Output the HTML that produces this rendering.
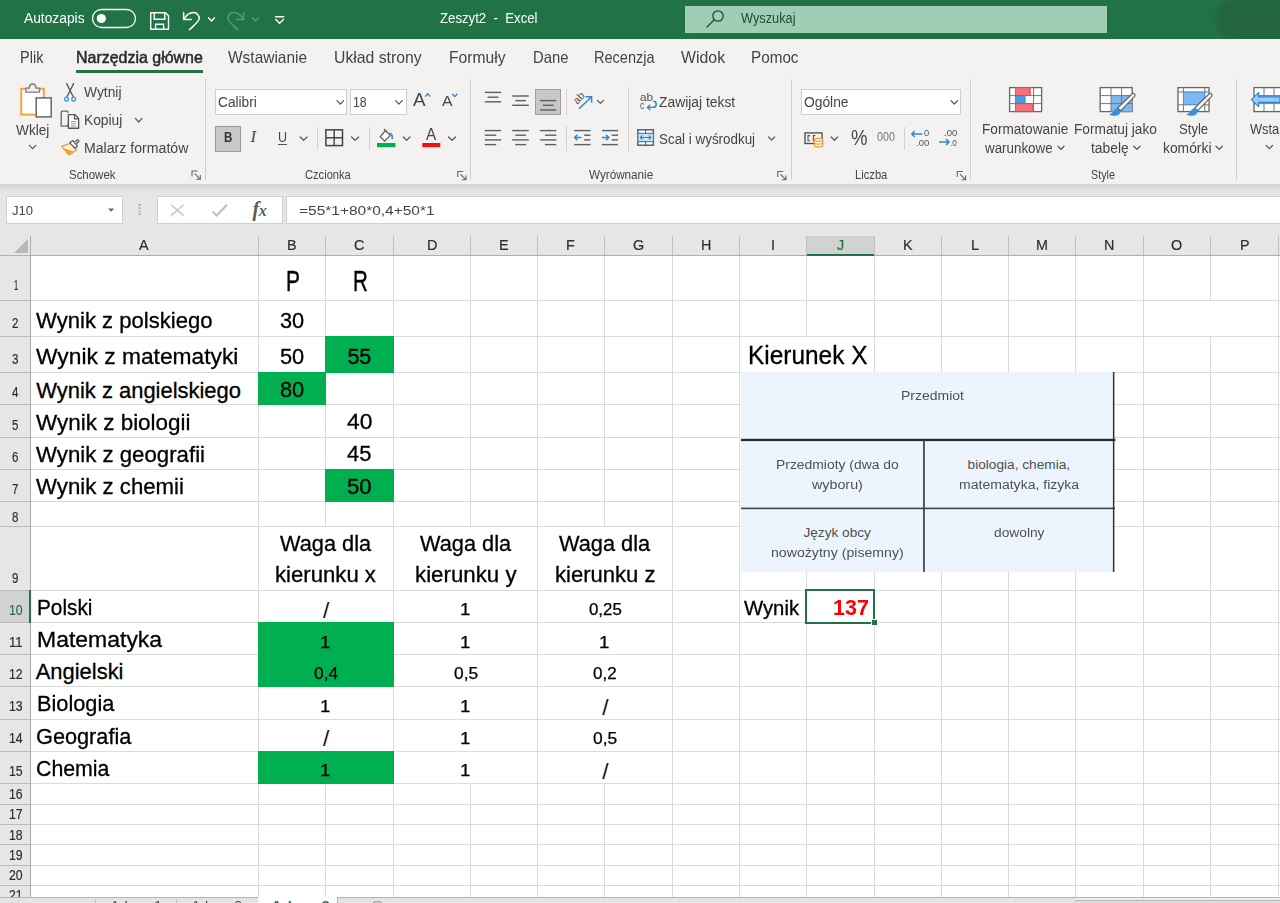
<!DOCTYPE html>
<html lang="pl"><head><meta charset="utf-8"><title>Zeszyt2 - Excel</title>
<style>
html,body{margin:0;padding:0;}
body{width:1280px;height:903px;overflow:hidden;position:relative;background:#fff;font-family:"Liberation Sans",sans-serif;}
body div{position:absolute;box-sizing:border-box;}
.t{white-space:pre;}
svg{position:absolute;overflow:visible;}

</style></head><body>
<div style="left:0px;top:0px;width:1280px;height:39px;background:#217346;"></div>
<div style="left:0px;top:39px;width:1280px;height:145px;background:#f3f2f1;"></div>
<div style="left:0px;top:184px;width:1280px;height:72px;background:#e6e6e6;"></div>
<div style="left:0;top:184px;width:1280px;height:7px;background:linear-gradient(#d2d2d2,#e6e6e6);"></div>
<div class="t" style="left:24.00px;top:9.36px;font-size:14.83px;line-height:19px;color:#fff;transform:scaleX(0.9293);transform-origin:left center;">Autozapis</div>
<div class="t" style="left:439.50px;top:9.16px;font-size:14.83px;line-height:19px;color:#fff;transform:scaleX(0.8896);transform-origin:left center;">Zeszyt2  -  Excel</div>
<div style="left:685px;top:6px;width:422px;height:27px;background:#a0ceb4;"></div>
<div class="t" style="left:740.50px;top:9.16px;font-size:14.83px;line-height:19px;color:#1e4e33;transform:scaleX(0.8607);transform-origin:left center;">Wyszukaj</div>
<div style="left:1180px;top:0;width:100px;height:39px;overflow:hidden;"><div style="left:36px;top:-3px;width:80px;height:45px;background:#22653f;border-radius:24px 0 0 24px;filter:blur(3px);"></div></div>
<svg style="left:0;top:0" width="1280" height="40" viewBox="0 0 1280 40">
<rect x="92.5" y="9.5" width="43" height="18" rx="9" fill="none" stroke="#fff" stroke-width="1.3"/>
<circle cx="101.3" cy="18.5" r="4.6" fill="#fff"/>
<path d="M150.7 12.8 H165.5 L168.5 15.8 V29.3 H150.7 Z" fill="none" stroke="#fff" stroke-width="1.4" stroke-linejoin="round"/>
<path d="M154.2 12.8 V19.2 H164.8 V12.8 M155.6 29.3 V24.3 H163.6 V29.3" fill="none" stroke="#fff" stroke-width="1.4"/>
<path d="M183.6 12.4 V19.6 H191.2" fill="none" stroke="#fff" stroke-width="1.5" stroke-linecap="round" stroke-linejoin="round"/>
<path d="M184 19.2 C186.5 15 190 12.6 193.3 12.6 C197.5 12.6 199.6 16 199.2 19 C198.8 21.5 196 23.5 189.3 29.8" fill="none" stroke="#fff" stroke-width="1.5" stroke-linecap="round"/>
<path d="M208.5 17.8 L211.5 21 L214.5 17.8" fill="none" stroke="#fff" stroke-width="1.4" stroke-linecap="round" stroke-linejoin="round"/>
<path d="M243.6 12.4 V19.6 H236" fill="none" stroke="#5c9a76" stroke-width="1.5" stroke-linecap="round" stroke-linejoin="round"/>
<path d="M243.2 19.2 C240.7 15 237.2 12.6 233.9 12.6 C229.7 12.6 227.6 16 228 19 C228.4 21.5 231.2 23.5 237.9 29.8" fill="none" stroke="#5c9a76" stroke-width="1.5" stroke-linecap="round"/>
<path d="M252.5 17.8 L255.5 21 L258.5 17.8" fill="none" stroke="#5c9a76" stroke-width="1.4" stroke-linecap="round" stroke-linejoin="round"/>
<path d="M275.5 16.8 H283.7" fill="none" stroke="#fff" stroke-width="1.4" stroke-linecap="round"/>
<path d="M275.8 19.6 L279.6 23.2 L283.4 19.6" fill="none" stroke="#fff" stroke-width="1.4" stroke-linecap="round" stroke-linejoin="round"/>
<circle cx="718" cy="16" r="5.2" fill="none" stroke="#1e4e33" stroke-width="1.3"/>
<path d="M714.2 19.8 L707 27" stroke="#1e4e33" stroke-width="1.3" stroke-linecap="round"/>
</svg>
<div class="t" style="left:20.00px;top:46.66px;font-size:16.28px;line-height:21px;color:#444;transform:scaleX(0.8938);transform-origin:left center;">Plik</div>
<div class="t" style="left:227.50px;top:46.66px;font-size:16.28px;line-height:21px;color:#444;transform:scaleX(0.9511);transform-origin:left center;">Wstawianie</div>
<div class="t" style="left:334.20px;top:46.66px;font-size:16.28px;line-height:21px;color:#444;transform:scaleX(0.9700);transform-origin:left center;">Układ strony</div>
<div class="t" style="left:449.20px;top:46.66px;font-size:16.28px;line-height:21px;color:#444;transform:scaleX(0.9614);transform-origin:left center;">Formuły</div>
<div class="t" style="left:532.50px;top:46.66px;font-size:16.28px;line-height:21px;color:#444;transform:scaleX(0.9124);transform-origin:left center;">Dane</div>
<div class="t" style="left:593.80px;top:46.66px;font-size:16.28px;line-height:21px;color:#444;transform:scaleX(0.8931);transform-origin:left center;">Recenzja</div>
<div class="t" style="left:681.30px;top:46.66px;font-size:16.28px;line-height:21px;color:#444;transform:scaleX(0.9749);transform-origin:left center;">Widok</div>
<div class="t" style="left:751.30px;top:46.66px;font-size:16.28px;line-height:21px;color:#444;transform:scaleX(0.9382);transform-origin:left center;">Pomoc</div>
<div class="t" style="left:76.00px;top:46.66px;font-size:16.28px;line-height:21px;color:#2b2b2b;-webkit-text-stroke:0.5px #2b2b2b;transform:scaleX(0.9813);transform-origin:left center;">Narzędzia główne</div>
<div style="left:76px;top:70px;width:127px;height:3px;background:#217346;"></div>
<div style="left:205px;top:79px;width:1px;height:101px;background:#d0cfce;"></div>
<div style="left:470px;top:79px;width:1px;height:101px;background:#d0cfce;"></div>
<div style="left:791px;top:79px;width:1px;height:101px;background:#d0cfce;"></div>
<div style="left:970px;top:79px;width:1px;height:101px;background:#d0cfce;"></div>
<div style="left:1236px;top:79px;width:1px;height:101px;background:#d0cfce;"></div>
<div style="left:317px;top:127px;width:1px;height:23px;background:#d2d1d0;"></div>
<div style="left:369px;top:127px;width:1px;height:23px;background:#d2d1d0;"></div>
<div style="left:565.5px;top:89px;width:1px;height:25.5px;background:#d2d1d0;"></div>
<div style="left:565.5px;top:126px;width:1px;height:24.5px;background:#d2d1d0;"></div>
<div style="left:627.5px;top:86.5px;width:1px;height:64.5px;background:#d2d1d0;"></div>
<div style="left:903.5px;top:127px;width:1px;height:23px;background:#d2d1d0;"></div>
<svg style="left:0;top:0" width="1280" height="200" viewBox="0 0 1280 200">
<rect x="21.2" y="88.8" width="22.6" height="25.8" fill="#fff" stroke="#f0a540" stroke-width="2"/>
<path d="M25.8 92.2 V88.2 H29.3 C29.3 82.6 36 82.6 36 88.2 H39.6 V92.2 Z" fill="#f3f2f1" stroke="#7a7a7a" stroke-width="1.3" stroke-linejoin="round"/>
<rect x="36.2" y="97.9" width="15" height="19" fill="#fff" stroke="#666" stroke-width="1.5"/>
<path d="M29.4 145.4 L32.599999999999994 148.6 L35.8 145.4" fill="none" stroke="#555" stroke-width="1.25" stroke-linecap="round" stroke-linejoin="round"/>
<path d="M66.6 83.6 L73.2 96.8 M73.6 83.6 L67 96.8" stroke="#555" stroke-width="1.3" stroke-linecap="round"/>
<circle cx="66.5" cy="99.1" r="1.9" fill="none" stroke="#3a96dd" stroke-width="1.3"/>
<circle cx="73.7" cy="99.1" r="1.9" fill="none" stroke="#3a96dd" stroke-width="1.3"/>
<path d="M68.2 123.5 V126.2 H61.2 V112.6 C61.2 111.6 61.8 111.2 62.6 111.2 H66.8 C67.8 111.2 68.2 111.8 68.2 113" fill="none" stroke="#666" stroke-width="1.3"/>
<path d="M68.4 114.6 H74.6 L78.6 118.6 V128.3 H68.4 Z" fill="#fff" stroke="#555" stroke-width="1.4" stroke-linejoin="round"/>
<path d="M74.4 114.8 V118.8 H78.4" fill="none" stroke="#555" stroke-width="1.2"/>
<path d="M71 121.6 H76 M71 123.8 H76 M71 126 H76" stroke="#8a8a8a" stroke-width="0.9"/>
<path d="M61.6 146.4 L69 155 L76.6 150 L70.6 143.4 Z" fill="#fdf1e0" stroke="#ee9a2e" stroke-width="1.3" stroke-linejoin="round"/>
<path d="M63.6 148.2 L69.2 154.6 L73.6 151.6 Z" fill="#f0a030"/>
<path d="M69.8 142.6 L72.8 140.6 L77.4 146.2 L75 148.4 Z" fill="#fff" stroke="#555" stroke-width="1.2" stroke-linejoin="round"/>
<path d="M74.6 142.2 L77.6 139.6 L79 141 L76.2 144" fill="#fff" stroke="#555" stroke-width="1.2" stroke-linejoin="round"/>
<path d="M135.4 118.4 L138.7 122 L142 118.4" fill="none" stroke="#555" stroke-width="1.25" stroke-linecap="round" stroke-linejoin="round"/>
<path d="M192.0 176.5 V171.0 H197.5" fill="none" stroke="#666" stroke-width="1.1"/><path d="M194.7 173.7 L200.1 179.1 M200.3 175.1 V179.3 H196.1" fill="none" stroke="#666" stroke-width="1.1"/>
</svg>
<div class="t" style="left:16.00px;top:120.57px;font-size:13.95px;line-height:18px;color:#444;transform:scaleX(0.9792);transform-origin:left center;">Wklej</div>
<div class="t" style="left:83.50px;top:83.47px;font-size:13.95px;line-height:18px;color:#444;transform:scaleX(0.9901);transform-origin:left center;">Wytnij</div>
<div class="t" style="left:83.50px;top:111.17px;font-size:13.95px;line-height:18px;color:#444;transform:scaleX(0.9876);transform-origin:left center;">Kopiuj</div>
<div class="t" style="left:83.50px;top:138.77px;font-size:13.95px;line-height:18px;color:#444;transform:scaleX(1.0130);transform-origin:left center;">Malarz formatów</div>
<div class="t" style="left:69.40px;top:166.97px;font-size:12.21px;line-height:16px;color:#444;transform:scaleX(0.9389);transform-origin:left center;">Schowek</div>
<div class="t" style="left:304.80px;top:166.97px;font-size:12.21px;line-height:16px;color:#444;transform:scaleX(0.9115);transform-origin:left center;">Czcionka</div>
<div class="t" style="left:588.50px;top:166.97px;font-size:12.21px;line-height:16px;color:#444;transform:scaleX(0.9569);transform-origin:left center;">Wyrównanie</div>
<div class="t" style="left:854.70px;top:166.97px;font-size:12.21px;line-height:16px;color:#444;transform:scaleX(0.9166);transform-origin:left center;">Liczba</div>
<div class="t" style="left:1090.60px;top:166.97px;font-size:12.21px;line-height:16px;color:#444;transform:scaleX(0.8797);transform-origin:left center;">Style</div>
<div style="left:215px;top:89px;width:132px;height:26px;background:#fff;border:1px solid #d0cecc;"></div>
<div style="left:349.5px;top:89px;width:57px;height:26px;background:#fff;border:1px solid #d0cecc;"></div>
<div class="t" style="left:217.80px;top:92.77px;font-size:13.95px;line-height:18px;color:#444;transform:scaleX(0.9836);transform-origin:left center;">Calibri</div>
<div class="t" style="left:353.30px;top:92.77px;font-size:13.95px;line-height:18px;color:#444;transform:scaleX(0.8848);transform-origin:left center;">18</div>
<div style="left:215px;top:126px;width:25.5px;height:25.5px;background:#c8c8c8;border:1px solid #9a9a9a;"></div>
<div class="t" style="left:223.70px;top:127.97px;font-size:14.53px;line-height:19px;color:#333;font-weight:bold;transform:scaleX(0.7934);transform-origin:left center;">B</div>
<div class="t" style="left:250.5px;top:126.3px;font-family:'Liberation Serif',serif;font-style:italic;font-size:16.5px;line-height:22px;color:#444;">I</div>
<div class="t" style="left:277.80px;top:128.47px;font-size:13.95px;line-height:18px;color:#444;transform:scaleX(0.8961);transform-origin:left center;">U</div>
<div style="left:277.5px;top:144.2px;width:9.6px;height:1.2px;background:#555;"></div>
<svg style="left:0;top:0" width="1280" height="200" viewBox="0 0 1280 200">
<path d="M337 100.6 L340.3 104.2 L343.6 100.6" fill="none" stroke="#555" stroke-width="1.25" stroke-linecap="round" stroke-linejoin="round"/>
<path d="M395.6 100.6 L398.9 104.2 L402.2 100.6" fill="none" stroke="#555" stroke-width="1.25" stroke-linecap="round" stroke-linejoin="round"/>
<path d="M300.2 137 L303.6 140.4 L307 137" fill="none" stroke="#555" stroke-width="1.25" stroke-linecap="round" stroke-linejoin="round"/>
<path d="M351.6 137 L355.1 140.4 L358.6 137" fill="none" stroke="#555" stroke-width="1.25" stroke-linecap="round" stroke-linejoin="round"/>
<path d="M403.3 137 L406.65 140.4 L410 137" fill="none" stroke="#555" stroke-width="1.25" stroke-linecap="round" stroke-linejoin="round"/>
<path d="M448.6 137 L452.1 140.4 L455.6 137" fill="none" stroke="#555" stroke-width="1.25" stroke-linecap="round" stroke-linejoin="round"/>
<path d="M425.2 96.6 L427.7 93.8 L430.2 96.6" fill="none" stroke="#2e86d0" stroke-width="1.3"/>
<path d="M452.2 93.8 L454.8 96.6 L457.4 93.8" fill="none" stroke="#2e86d0" stroke-width="1.3"/>
<rect x="325.9" y="129.8" width="16.6" height="15.8" fill="none" stroke="#444" stroke-width="1.5"/>
<path d="M334.2 129.8 V145.6 M325.9 137.7 H342.5" stroke="#444" stroke-width="1.4"/>
<rect x="377" y="143" width="18.5" height="4.2" fill="#00b050"/>
<path d="M380.2 136.6 L385.4 130.6 L390.2 135.4 L384.6 141.2 Z" fill="#fff" stroke="#555" stroke-width="1.2" stroke-linejoin="round"/>
<path d="M384 129 L387 132.2" stroke="#555" stroke-width="1.2"/>
<path d="M389 133.6 C391.6 133.2 392.6 135 392.2 139" fill="none" stroke="#2e86d0" stroke-width="1.6"/>
<rect x="422.3" y="143" width="18" height="4.2" fill="#ee1111"/>
<path d="M457.7 177 V171.5 H463.2" fill="none" stroke="#666" stroke-width="1.1"/><path d="M460.4 174.2 L465.8 179.6 M466.0 175.6 V179.8 H461.8" fill="none" stroke="#666" stroke-width="1.1"/>
</svg>
<div class="t" style="left:412.80px;top:87.45px;font-size:19.19px;line-height:25px;color:#444;transform:scaleX(0.9800);transform-origin:left center;">A</div>
<div class="t" style="left:442.30px;top:91.26px;font-size:15.41px;line-height:20px;color:#444;transform:scaleX(1.0267);transform-origin:left center;">A</div>
<div class="t" style="left:426.40px;top:124.36px;font-size:16.86px;line-height:22px;color:#444;transform:scaleX(0.9030);transform-origin:left center;">A</div>
<div style="left:535.4px;top:88.5px;width:25.6px;height:26.2px;background:#c8c8c8;border:1px solid #9e9e9e;"></div>
<svg style="left:0;top:0" width="1280" height="200" viewBox="0 0 1280 200"><path d="M484.8 92.4 H501.1" stroke="#5e5e5e" stroke-width="1.4"/><path d="M487.6 97.2 H498.5" stroke="#5e5e5e" stroke-width="1.4"/><path d="M484.8 101.8 H501.1" stroke="#5e5e5e" stroke-width="1.4"/><path d="M512.2 96 H528.8" stroke="#5e5e5e" stroke-width="1.4"/><path d="M515.3 100.6 H526" stroke="#5e5e5e" stroke-width="1.4"/><path d="M512.2 105.3 H528.8" stroke="#5e5e5e" stroke-width="1.4"/><path d="M540.1 100.6 H556.3" stroke="#5e5e5e" stroke-width="1.4"/><path d="M543 105.3 H553.6" stroke="#5e5e5e" stroke-width="1.4"/><path d="M540.1 110 H556.3" stroke="#5e5e5e" stroke-width="1.4"/><path d="M484.8 130.6 H501.1" stroke="#5e5e5e" stroke-width="1.4"/><path d="M484.8 135.2 H496.2" stroke="#5e5e5e" stroke-width="1.4"/><path d="M484.8 139.9 H501.1" stroke="#5e5e5e" stroke-width="1.4"/><path d="M484.8 144.6 H496.2" stroke="#5e5e5e" stroke-width="1.4"/><path d="M512.2 130.6 H528.8" stroke="#5e5e5e" stroke-width="1.4"/><path d="M515.3 135.2 H526" stroke="#5e5e5e" stroke-width="1.4"/><path d="M512.2 139.9 H528.8" stroke="#5e5e5e" stroke-width="1.4"/><path d="M515.3 144.6 H526" stroke="#5e5e5e" stroke-width="1.4"/><path d="M540.1 130.6 H556.3" stroke="#5e5e5e" stroke-width="1.4"/><path d="M545 135.2 H556.3" stroke="#5e5e5e" stroke-width="1.4"/><path d="M540.1 139.9 H556.3" stroke="#5e5e5e" stroke-width="1.4"/><path d="M545 144.6 H556.3" stroke="#5e5e5e" stroke-width="1.4"/><path d="M574.1 130.6 H590.5" stroke="#5e5e5e" stroke-width="1.4"/><path d="M584.1 135.2 H590.5" stroke="#5e5e5e" stroke-width="1.4"/><path d="M584.1 139.9 H590.5" stroke="#5e5e5e" stroke-width="1.4"/><path d="M574.1 144.6 H590.5" stroke="#5e5e5e" stroke-width="1.4"/><path d="M602 130.6 H618" stroke="#5e5e5e" stroke-width="1.4"/><path d="M611.6 135.2 H618" stroke="#5e5e5e" stroke-width="1.4"/><path d="M611.6 139.9 H618" stroke="#5e5e5e" stroke-width="1.4"/><path d="M602 144.6 H618" stroke="#5e5e5e" stroke-width="1.4"/>
<path d="M574.6 137.5 H581.4 M577.4 134.7 L574.6 137.5 L577.4 140.3" fill="none" stroke="#2b88d8" stroke-width="1.5"/>
<path d="M602 137.5 H608.8 M606 134.7 L608.8 137.5 L606 140.3" fill="none" stroke="#2b88d8" stroke-width="1.5"/>
<path d="M579 108.8 L591.4 97 M585.6 96.8 H591.6 V102.8" fill="none" stroke="#2b88d8" stroke-width="1.5"/>
<path d="M597.3 100.4 L600.45 103.4 L603.6 100.4" fill="none" stroke="#555" stroke-width="1.25" stroke-linecap="round" stroke-linejoin="round"/>
<path d="M768.7 137 L771.6500000000001 140.2 L774.6 137" fill="none" stroke="#555" stroke-width="1.25" stroke-linecap="round" stroke-linejoin="round"/>
<path d="M653.4 101.2 C657.4 101.4 657.2 107.4 653 107.4 H647.6 M650.2 104.8 L647.4 107.4 L650.2 110" fill="none" stroke="#2b88d8" stroke-width="1.4"/>
<rect x="637.8" y="129.8" width="15.6" height="15.4" fill="#fff" stroke="#555" stroke-width="1.4"/>
<path d="M645.6 129.8 V133.4 M645.6 141.6 V145.2" stroke="#666" stroke-width="1.1"/>
<rect x="637.8" y="133.4" width="15.6" height="8.2" fill="#cfe4f7" stroke="#2b88d8" stroke-width="1.2"/>
<path d="M640.4 137.5 H650.8 M642.4 135.5 L640.4 137.5 L642.4 139.5 M648.8 135.5 L650.8 137.5 L648.8 139.5" fill="none" stroke="#2b88d8" stroke-width="1.2"/>
<path d="M777.7 177 V171.5 H783.2" fill="none" stroke="#666" stroke-width="1.1"/><path d="M780.4000000000001 174.2 L785.8000000000001 179.6 M786.0 175.6 V179.8 H781.8000000000001" fill="none" stroke="#666" stroke-width="1.1"/>
</svg>
<div class="t" style="left:578.5px;top:93.5px;font-size:10.5px;line-height:12px;color:#555;transform:rotate(-48deg);transform-origin:left bottom;">ab</div>
<div class="t" style="left:639.80px;top:91.02px;font-size:10.03px;line-height:13px;color:#555;transform:scaleX(1.1856);transform-origin:left center;">ab</div>
<div class="t" style="left:639.80px;top:98.92px;font-size:10.03px;line-height:13px;color:#555;transform:scaleX(0.8375);transform-origin:left center;">c</div>
<div class="t" style="left:659.00px;top:92.67px;font-size:13.95px;line-height:18px;color:#444;transform:scaleX(0.9932);transform-origin:left center;">Zawijaj tekst</div>
<div class="t" style="left:659.00px;top:129.57px;font-size:13.95px;line-height:18px;color:#444;transform:scaleX(0.9618);transform-origin:left center;">Scal i wyśrodkuj</div>
<div style="left:801px;top:89px;width:160px;height:26px;background:#fff;border:1px solid #d0cecc;"></div>
<div class="t" style="left:803.80px;top:92.77px;font-size:13.95px;line-height:18px;color:#444;transform:scaleX(0.9914);transform-origin:left center;">Ogólne</div>
<svg style="left:0;top:0" width="1280" height="200" viewBox="0 0 1280 200">
<path d="M951 100.6 L954.3 104 L957.6 100.6" fill="none" stroke="#555" stroke-width="1.25" stroke-linecap="round" stroke-linejoin="round"/>
<path d="M831.2 137 L834.4000000000001 140.4 L837.6 137" fill="none" stroke="#555" stroke-width="1.25" stroke-linecap="round" stroke-linejoin="round"/>
<rect x="805" y="132.9" width="17" height="10.6" fill="#f3f2f1" stroke="#555" stroke-width="1.4"/>
<path d="M810 135.6 H808 V140.8 H810 M815.4 135.6 H813.4 V140.8 H815.4" fill="none" stroke="#555" stroke-width="1.1"/>
<path d="M814.4 139.8 V145.2 C814.4 147.4 822.8 147.4 822.8 145.2 V139.8" fill="#fff" stroke="#ee9a2e" stroke-width="1.2"/>
<ellipse cx="818.6" cy="139.8" rx="4.2" ry="1.5" fill="#fff" stroke="#ee9a2e" stroke-width="1.2"/>
<path d="M814.4 142.6 C814.4 144.6 822.8 144.6 822.8 142.6" fill="none" stroke="#ee9a2e" stroke-width="1.1"/>
<path d="M911.8 134 H922.4 M914.8 131 L911.8 134 L914.8 137" fill="none" stroke="#2b88d8" stroke-width="1.5"/>
<path d="M939 142 H949 M946 139 L949 142 L946 145" fill="none" stroke="#2b88d8" stroke-width="1.5"/>
<path d="M957.3 177 V171.5 H962.8" fill="none" stroke="#666" stroke-width="1.1"/><path d="M960.0 174.2 L965.4 179.6 M965.5999999999999 175.6 V179.8 H961.4" fill="none" stroke="#666" stroke-width="1.1"/>
</svg>
<div class="t" style="left:850.50px;top:124.15px;font-size:21.22px;line-height:28px;color:#444;transform:scaleX(0.8737);transform-origin:left center;">%</div>
<div class="t" style="left:877.30px;top:129.42px;font-size:12.06px;line-height:16px;color:#777;transform:scaleX(0.8888);transform-origin:left center;">000</div>
<div class="t" style="left:923.60px;top:127.28px;font-size:9.59px;line-height:12px;color:#555;transform:scaleX(0.9770);transform-origin:left center;">0</div>
<div class="t" style="left:915.60px;top:136.58px;font-size:9.59px;line-height:12px;color:#555;transform:scaleX(0.9902);transform-origin:left center;">.00</div>
<div class="t" style="left:943.50px;top:127.28px;font-size:9.59px;line-height:12px;color:#555;transform:scaleX(0.9902);transform-origin:left center;">.00</div>
<div class="t" style="left:949.80px;top:136.58px;font-size:9.59px;line-height:12px;color:#555;transform:scaleX(0.8617);transform-origin:left center;">.0</div>
<svg style="left:0;top:0" width="1280" height="200" viewBox="0 0 1280 200">
<rect x="1009.6" y="87.6" width="32" height="24" fill="#fff" stroke="#666" stroke-width="1.3"/>
<path d="M1009.6 95.6 H1041.6 M1009.6 103.6 H1041.6 M1017.6 87.6 V111.6 M1025.6 87.6 V111.6 M1033.6 87.6 V111.6" stroke="#777" stroke-width="1"/>
<rect x="1015.6" y="87.6" width="14.6" height="8" fill="#f4707a" stroke="#e0454f" stroke-width="1"/>
<rect x="1015.6" y="95.6" width="9.6" height="8" fill="#4f9be0" stroke="#3a86d0" stroke-width="1"/>
<rect x="1025.6" y="96.1" width="7.4" height="7" fill="#fff"/>
<rect x="1015.6" y="103.6" width="17.2" height="8" fill="#f4707a" stroke="#e0454f" stroke-width="1"/>
<path d="M1058 146.2 L1061.0 149.4 L1064 146.2" fill="none" stroke="#555" stroke-width="1.25" stroke-linecap="round" stroke-linejoin="round"/>
<rect x="1100.2" y="87.6" width="32" height="24" fill="#fff" stroke="#666" stroke-width="1.3"/>
<rect x="1111" y="95.6" width="21.2" height="16" fill="#7db8ee"/>
<path d="M1100.2 95.6 H1132.2 M1100.2 103.6 H1132.2 M1111 87.6 V111.6 M1121.6 87.6 V111.6" stroke="#777" stroke-width="1"/>
<path d="M1134.6 96.4 L1120.6 110.8 L1117.6 108 L1132 94 C1134 92.6 1136 94.4 1134.6 96.4 Z" fill="#f8f8f8" stroke="#666" stroke-width="1.2"/>
<path d="M1117.4 108.2 C1113.6 108.6 1113.8 113 1109.4 114.4 C1114.4 117.4 1120.6 115.6 1120.6 111 Z" fill="#3a8de0"/>
<path d="M1133.8 146.2 L1136.9 149.4 L1140 146.2" fill="none" stroke="#555" stroke-width="1.25" stroke-linecap="round" stroke-linejoin="round"/>
<rect x="1178" y="87.6" width="31" height="24" fill="#fff" stroke="#666" stroke-width="1.3"/>
<path d="M1178 92 H1209 M1178 104.8 H1209 M1183.4 87.6 V111.6 M1204.8 87.6 V111.6" stroke="#777" stroke-width="1"/>
<rect x="1183.6" y="92.2" width="21" height="12.4" fill="#7db8ee" stroke="#4a90d9" stroke-width="0.8"/>
<path d="M1211.6 96.4 L1197.6 110.8 L1194.6 108 L1209 94 C1211 92.6 1213 94.4 1211.6 96.4 Z" fill="#f8f8f8" stroke="#666" stroke-width="1.2"/>
<path d="M1194.4 108.2 C1190.6 108.6 1190.8 113 1186.4 114.4 C1191.4 117.4 1197.6 115.6 1197.6 111 Z" fill="#3a8de0"/>
<path d="M1216 146.2 L1219.2 149.4 L1222.4 146.2" fill="none" stroke="#555" stroke-width="1.25" stroke-linecap="round" stroke-linejoin="round"/>
<rect x="1254" y="87.6" width="30" height="24" fill="#fff" stroke="#666" stroke-width="1.3"/>
<path d="M1254 95.6 H1284 M1254 103.6 H1284 M1264 87.6 V111.6 M1274 87.6 V111.6" stroke="#777" stroke-width="1"/>
<rect x="1258" y="96" width="24" height="7.2" fill="#7db8ee"/>
<path d="M1258.6 92.6 L1251.4 99.6 L1258.6 106.6 V102.4 H1280 V96.8 H1258.6 Z" fill="#9ccbf5" stroke="#2e86d0" stroke-width="1.2" stroke-linejoin="round"/>
<path d="M1266.2 145.4 L1269.4 148.6 L1272.6 145.4" fill="none" stroke="#555" stroke-width="1.25" stroke-linecap="round" stroke-linejoin="round"/>
</svg>
<div class="t" style="left:981.70px;top:120.27px;font-size:13.95px;line-height:18px;color:#444;transform:scaleX(0.9765);transform-origin:left center;">Formatowanie</div>
<div class="t" style="left:985.27px;top:138.77px;font-size:13.95px;line-height:18px;color:#444;transform:scaleX(0.9596);transform-origin:left center;">warunkowe</div>
<div class="t" style="left:1074.00px;top:120.27px;font-size:13.95px;line-height:18px;color:#444;transform:scaleX(0.9818);transform-origin:left center;">Formatuj jako</div>
<div class="t" style="left:1090.60px;top:138.77px;font-size:13.95px;line-height:18px;color:#444;transform:scaleX(0.9917);transform-origin:left center;">tabelę</div>
<div class="t" style="left:1178.80px;top:120.27px;font-size:13.95px;line-height:18px;color:#444;transform:scaleX(0.9408);transform-origin:left center;">Style</div>
<div class="t" style="left:1162.80px;top:138.77px;font-size:13.95px;line-height:18px;color:#444;transform:scaleX(0.9933);transform-origin:left center;">komórki</div>
<div class="t" style="left:1250.20px;top:120.27px;font-size:13.95px;line-height:18px;color:#444;transform:scaleX(0.9212);transform-origin:left center;">Wsta</div>
<div style="left:6px;top:196px;width:117px;height:28px;background:#fff;border:1px solid #cfcfcf;"></div>
<div style="left:156.5px;top:196px;width:126.5px;height:28px;background:#fff;border:1px solid #cfcfcf;"></div>
<div style="left:286px;top:196px;width:1000px;height:28px;background:#fff;border:1px solid #cfcfcf;"></div>
<div class="t" style="left:12.00px;top:202.07px;font-size:13.66px;line-height:18px;color:#444;transform:scaleX(0.9549);transform-origin:left center;">J10</div>
<div class="t" style="left:298.80px;top:202.07px;font-size:13.66px;line-height:18px;color:#444;transform:scaleX(1.1332);transform-origin:left center;">=55*1+80*0,4+50*1</div>
<svg style="left:0;top:0" width="1280" height="260" viewBox="0 0 1280 260">
<path d="M108 208.4 H114.2 L111.1 211.8 Z" fill="#666"/>
<path d="M139.6 204 V215" stroke="#b4b4b4" stroke-width="2.4" stroke-dasharray="1.9 1.3"/>
<path d="M171 204.8 L183.6 215.6 M183.6 204.8 L171 215.6" stroke="#c6c6c6" stroke-width="1.5"/>
<path d="M212.6 211.4 L216.6 215.6 L227 204.8" fill="none" stroke="#bdbdbd" stroke-width="2"/>
</svg>
<div class="t" style="left:252.5px;top:198px;font-family:'Liberation Serif',serif;font-style:italic;font-size:18px;line-height:22px;color:#5a5a5a;letter-spacing:-0.5px;"><span style="font-size:20px;font-weight:bold;">f</span><span style="font-size:16px;font-weight:bold;">x</span></div>
<div style="left:0px;top:256px;width:1280px;height:647px;background:#fff;"></div>
<div style="left:258px;top:256px;width:1px;height:647px;background:#dbdbdb;"></div>
<div style="left:325px;top:256px;width:1px;height:647px;background:#dbdbdb;"></div>
<div style="left:393px;top:256px;width:1px;height:647px;background:#dbdbdb;"></div>
<div style="left:470px;top:256px;width:1px;height:647px;background:#dbdbdb;"></div>
<div style="left:537px;top:256px;width:1px;height:647px;background:#dbdbdb;"></div>
<div style="left:604px;top:256px;width:1px;height:647px;background:#dbdbdb;"></div>
<div style="left:672px;top:256px;width:1px;height:647px;background:#dbdbdb;"></div>
<div style="left:739px;top:256px;width:1px;height:647px;background:#dbdbdb;"></div>
<div style="left:806px;top:256px;width:1px;height:647px;background:#dbdbdb;"></div>
<div style="left:874px;top:256px;width:1px;height:647px;background:#dbdbdb;"></div>
<div style="left:941px;top:256px;width:1px;height:647px;background:#dbdbdb;"></div>
<div style="left:1008px;top:256px;width:1px;height:647px;background:#dbdbdb;"></div>
<div style="left:1075px;top:256px;width:1px;height:647px;background:#dbdbdb;"></div>
<div style="left:1143px;top:256px;width:1px;height:647px;background:#dbdbdb;"></div>
<div style="left:1210px;top:256px;width:1px;height:647px;background:#dbdbdb;"></div>
<div style="left:1278px;top:256px;width:1px;height:647px;background:#dbdbdb;"></div>
<div style="left:31px;top:300px;width:1249px;height:1px;background:#dbdbdb;"></div>
<div style="left:31px;top:336px;width:1249px;height:1px;background:#dbdbdb;"></div>
<div style="left:31px;top:372px;width:1249px;height:1px;background:#dbdbdb;"></div>
<div style="left:31px;top:404px;width:1249px;height:1px;background:#dbdbdb;"></div>
<div style="left:31px;top:437px;width:1249px;height:1px;background:#dbdbdb;"></div>
<div style="left:31px;top:469px;width:1249px;height:1px;background:#dbdbdb;"></div>
<div style="left:31px;top:501px;width:1249px;height:1px;background:#dbdbdb;"></div>
<div style="left:31px;top:526px;width:1249px;height:1px;background:#dbdbdb;"></div>
<div style="left:31px;top:590px;width:1249px;height:1px;background:#dbdbdb;"></div>
<div style="left:31px;top:622px;width:1249px;height:1px;background:#dbdbdb;"></div>
<div style="left:31px;top:654px;width:1249px;height:1px;background:#dbdbdb;"></div>
<div style="left:31px;top:686px;width:1249px;height:1px;background:#dbdbdb;"></div>
<div style="left:31px;top:719px;width:1249px;height:1px;background:#dbdbdb;"></div>
<div style="left:31px;top:751px;width:1249px;height:1px;background:#dbdbdb;"></div>
<div style="left:31px;top:783px;width:1249px;height:1px;background:#dbdbdb;"></div>
<div style="left:31px;top:804px;width:1249px;height:1px;background:#dbdbdb;"></div>
<div style="left:31px;top:824px;width:1249px;height:1px;background:#dbdbdb;"></div>
<div style="left:31px;top:844px;width:1249px;height:1px;background:#dbdbdb;"></div>
<div style="left:31px;top:865px;width:1249px;height:1px;background:#dbdbdb;"></div>
<div style="left:31px;top:885px;width:1249px;height:1px;background:#dbdbdb;"></div>
<div style="left:0px;top:256px;width:30px;height:647px;background:#e6e6e6;"></div>
<div style="left:0px;top:300px;width:30px;height:1px;background:#bcbcbc;"></div>
<div style="left:0px;top:336px;width:30px;height:1px;background:#bcbcbc;"></div>
<div style="left:0px;top:372px;width:30px;height:1px;background:#bcbcbc;"></div>
<div style="left:0px;top:404px;width:30px;height:1px;background:#bcbcbc;"></div>
<div style="left:0px;top:437px;width:30px;height:1px;background:#bcbcbc;"></div>
<div style="left:0px;top:469px;width:30px;height:1px;background:#bcbcbc;"></div>
<div style="left:0px;top:501px;width:30px;height:1px;background:#bcbcbc;"></div>
<div style="left:0px;top:526px;width:30px;height:1px;background:#bcbcbc;"></div>
<div style="left:0px;top:590px;width:30px;height:1px;background:#bcbcbc;"></div>
<div style="left:0px;top:622px;width:30px;height:1px;background:#bcbcbc;"></div>
<div style="left:0px;top:654px;width:30px;height:1px;background:#bcbcbc;"></div>
<div style="left:0px;top:686px;width:30px;height:1px;background:#bcbcbc;"></div>
<div style="left:0px;top:719px;width:30px;height:1px;background:#bcbcbc;"></div>
<div style="left:0px;top:751px;width:30px;height:1px;background:#bcbcbc;"></div>
<div style="left:0px;top:783px;width:30px;height:1px;background:#bcbcbc;"></div>
<div style="left:0px;top:804px;width:30px;height:1px;background:#bcbcbc;"></div>
<div style="left:0px;top:824px;width:30px;height:1px;background:#bcbcbc;"></div>
<div style="left:0px;top:844px;width:30px;height:1px;background:#bcbcbc;"></div>
<div style="left:0px;top:865px;width:30px;height:1px;background:#bcbcbc;"></div>
<div style="left:0px;top:885px;width:30px;height:1px;background:#bcbcbc;"></div>
<div style="left:30px;top:236px;width:1px;height:667px;background:#ababab;"></div>
<div style="left:0px;top:255px;width:1280px;height:1px;background:#b0b0b0;"></div>
<div style="left:258px;top:236px;width:1px;height:19px;background:#c0c0c0;"></div>
<div style="left:325px;top:236px;width:1px;height:19px;background:#c0c0c0;"></div>
<div style="left:393px;top:236px;width:1px;height:19px;background:#c0c0c0;"></div>
<div style="left:470px;top:236px;width:1px;height:19px;background:#c0c0c0;"></div>
<div style="left:537px;top:236px;width:1px;height:19px;background:#c0c0c0;"></div>
<div style="left:604px;top:236px;width:1px;height:19px;background:#c0c0c0;"></div>
<div style="left:672px;top:236px;width:1px;height:19px;background:#c0c0c0;"></div>
<div style="left:739px;top:236px;width:1px;height:19px;background:#c0c0c0;"></div>
<div style="left:806px;top:236px;width:1px;height:19px;background:#c0c0c0;"></div>
<div style="left:874px;top:236px;width:1px;height:19px;background:#c0c0c0;"></div>
<div style="left:941px;top:236px;width:1px;height:19px;background:#c0c0c0;"></div>
<div style="left:1008px;top:236px;width:1px;height:19px;background:#c0c0c0;"></div>
<div style="left:1075px;top:236px;width:1px;height:19px;background:#c0c0c0;"></div>
<div style="left:1143px;top:236px;width:1px;height:19px;background:#c0c0c0;"></div>
<div style="left:1210px;top:236px;width:1px;height:19px;background:#c0c0c0;"></div>
<div style="left:1278px;top:236px;width:1px;height:19px;background:#c0c0c0;"></div>
<div style="left:807px;top:236px;width:67px;height:19px;background:#d2d2d2;"></div>
<div style="left:807px;top:254px;width:67px;height:2px;background:#217346;"></div>
<div style="left:0px;top:591px;width:29px;height:31px;background:#d2d2d2;"></div>
<div style="left:29px;top:590px;width:2px;height:33px;background:#217346;"></div>
<svg style="left:13px;top:238px" width="16" height="16"><path d="M15 1 L15 15 L1 15 Z" fill="#b8b8b8"/></svg>
<div class="t" style="left:139.49px;top:235.21px;font-size:14.97px;line-height:19px;color:#2e2e2e;-webkit-text-stroke:0.2px #2e2e2e;transform:scaleX(0.9601);transform-origin:left center;">A</div>
<div class="t" style="left:287.02px;top:235.21px;font-size:14.97px;line-height:19px;color:#2e2e2e;-webkit-text-stroke:0.2px #2e2e2e;transform:scaleX(0.9601);transform-origin:left center;">B</div>
<div class="t" style="left:354.13px;top:235.21px;font-size:14.97px;line-height:19px;color:#2e2e2e;-webkit-text-stroke:0.2px #2e2e2e;transform:scaleX(0.9601);transform-origin:left center;">C</div>
<div class="t" style="left:426.63px;top:235.21px;font-size:14.97px;line-height:19px;color:#2e2e2e;-webkit-text-stroke:0.2px #2e2e2e;transform:scaleX(0.9601);transform-origin:left center;">D</div>
<div class="t" style="left:499.02px;top:235.21px;font-size:14.97px;line-height:19px;color:#2e2e2e;-webkit-text-stroke:0.2px #2e2e2e;transform:scaleX(0.9601);transform-origin:left center;">E</div>
<div class="t" style="left:566.42px;top:235.21px;font-size:14.97px;line-height:19px;color:#2e2e2e;-webkit-text-stroke:0.2px #2e2e2e;transform:scaleX(0.9601);transform-origin:left center;">F</div>
<div class="t" style="left:632.69px;top:235.21px;font-size:14.97px;line-height:19px;color:#2e2e2e;-webkit-text-stroke:0.2px #2e2e2e;transform:scaleX(0.9601);transform-origin:left center;">G</div>
<div class="t" style="left:700.63px;top:235.21px;font-size:14.97px;line-height:19px;color:#2e2e2e;-webkit-text-stroke:0.2px #2e2e2e;transform:scaleX(0.9601);transform-origin:left center;">H</div>
<div class="t" style="left:770.79px;top:235.21px;font-size:14.97px;line-height:19px;color:#2e2e2e;-webkit-text-stroke:0.2px #2e2e2e;transform:scaleX(0.9601);transform-origin:left center;">I</div>
<div class="t" style="left:836.71px;top:235.21px;font-size:14.97px;line-height:19px;color:#217346;-webkit-text-stroke:0.2px #217346;transform:scaleX(0.9601);transform-origin:left center;">J</div>
<div class="t" style="left:903.02px;top:235.21px;font-size:14.97px;line-height:19px;color:#2e2e2e;-webkit-text-stroke:0.2px #2e2e2e;transform:scaleX(0.9601);transform-origin:left center;">K</div>
<div class="t" style="left:970.81px;top:235.21px;font-size:14.97px;line-height:19px;color:#2e2e2e;-webkit-text-stroke:0.2px #2e2e2e;transform:scaleX(0.9601);transform-origin:left center;">L</div>
<div class="t" style="left:1035.80px;top:235.21px;font-size:14.97px;line-height:19px;color:#2e2e2e;-webkit-text-stroke:0.2px #2e2e2e;transform:scaleX(0.9601);transform-origin:left center;">M</div>
<div class="t" style="left:1104.13px;top:235.21px;font-size:14.97px;line-height:19px;color:#2e2e2e;-webkit-text-stroke:0.2px #2e2e2e;transform:scaleX(0.9601);transform-origin:left center;">N</div>
<div class="t" style="left:1171.19px;top:235.21px;font-size:14.97px;line-height:19px;color:#2e2e2e;-webkit-text-stroke:0.2px #2e2e2e;transform:scaleX(0.9601);transform-origin:left center;">O</div>
<div class="t" style="left:1239.52px;top:235.21px;font-size:14.97px;line-height:19px;color:#2e2e2e;-webkit-text-stroke:0.2px #2e2e2e;transform:scaleX(0.9601);transform-origin:left center;">P</div>
<div class="t" style="left:13.50px;top:276.41px;font-size:14.68px;line-height:19px;color:#2e2e2e;-webkit-text-stroke:0.2px #2e2e2e;transform:scaleX(0.5155);transform-origin:left center;">1</div>
<div class="t" style="left:12.40px;top:314.41px;font-size:14.68px;line-height:19px;color:#2e2e2e;-webkit-text-stroke:0.2px #2e2e2e;transform:scaleX(0.7855);transform-origin:left center;">2</div>
<div class="t" style="left:12.40px;top:349.91px;font-size:14.68px;line-height:19px;color:#2e2e2e;-webkit-text-stroke:0.2px #2e2e2e;transform:scaleX(0.7855);transform-origin:left center;">3</div>
<div class="t" style="left:12.40px;top:383.21px;font-size:14.68px;line-height:19px;color:#2e2e2e;-webkit-text-stroke:0.2px #2e2e2e;transform:scaleX(0.7855);transform-origin:left center;">4</div>
<div class="t" style="left:12.40px;top:415.71px;font-size:14.68px;line-height:19px;color:#2e2e2e;-webkit-text-stroke:0.2px #2e2e2e;transform:scaleX(0.7855);transform-origin:left center;">5</div>
<div class="t" style="left:12.40px;top:447.91px;font-size:14.68px;line-height:19px;color:#2e2e2e;-webkit-text-stroke:0.2px #2e2e2e;transform:scaleX(0.7855);transform-origin:left center;">6</div>
<div class="t" style="left:12.40px;top:479.91px;font-size:14.68px;line-height:19px;color:#2e2e2e;-webkit-text-stroke:0.2px #2e2e2e;transform:scaleX(0.7855);transform-origin:left center;">7</div>
<div class="t" style="left:12.40px;top:507.81px;font-size:14.68px;line-height:19px;color:#2e2e2e;-webkit-text-stroke:0.2px #2e2e2e;transform:scaleX(0.7855);transform-origin:left center;">8</div>
<div class="t" style="left:12.40px;top:568.81px;font-size:14.68px;line-height:19px;color:#2e2e2e;-webkit-text-stroke:0.2px #2e2e2e;transform:scaleX(0.7855);transform-origin:left center;">9</div>
<div class="t" style="left:9.30px;top:600.81px;font-size:14.68px;line-height:19px;color:#217346;-webkit-text-stroke:0.2px #217346;transform:scaleX(0.8346);transform-origin:left center;">10</div>
<div class="t" style="left:9.30px;top:633.01px;font-size:14.68px;line-height:19px;color:#2e2e2e;-webkit-text-stroke:0.2px #2e2e2e;transform:scaleX(0.8908);transform-origin:left center;">11</div>
<div class="t" style="left:9.30px;top:664.71px;font-size:14.68px;line-height:19px;color:#2e2e2e;-webkit-text-stroke:0.2px #2e2e2e;transform:scaleX(0.8346);transform-origin:left center;">12</div>
<div class="t" style="left:9.30px;top:697.41px;font-size:14.68px;line-height:19px;color:#2e2e2e;-webkit-text-stroke:0.2px #2e2e2e;transform:scaleX(0.8346);transform-origin:left center;">13</div>
<div class="t" style="left:9.30px;top:729.41px;font-size:14.68px;line-height:19px;color:#2e2e2e;-webkit-text-stroke:0.2px #2e2e2e;transform:scaleX(0.8346);transform-origin:left center;">14</div>
<div class="t" style="left:9.30px;top:761.71px;font-size:14.68px;line-height:19px;color:#2e2e2e;-webkit-text-stroke:0.2px #2e2e2e;transform:scaleX(0.8346);transform-origin:left center;">15</div>
<div class="t" style="left:9.30px;top:784.71px;font-size:14.68px;line-height:19px;color:#2e2e2e;-webkit-text-stroke:0.2px #2e2e2e;transform:scaleX(0.8346);transform-origin:left center;">16</div>
<div class="t" style="left:9.30px;top:805.11px;font-size:14.68px;line-height:19px;color:#2e2e2e;-webkit-text-stroke:0.2px #2e2e2e;transform:scaleX(0.8346);transform-origin:left center;">17</div>
<div class="t" style="left:9.30px;top:825.51px;font-size:14.68px;line-height:19px;color:#2e2e2e;-webkit-text-stroke:0.2px #2e2e2e;transform:scaleX(0.8346);transform-origin:left center;">18</div>
<div class="t" style="left:9.30px;top:845.61px;font-size:14.68px;line-height:19px;color:#2e2e2e;-webkit-text-stroke:0.2px #2e2e2e;transform:scaleX(0.8346);transform-origin:left center;">19</div>
<div class="t" style="left:9.30px;top:866.01px;font-size:14.68px;line-height:19px;color:#2e2e2e;-webkit-text-stroke:0.2px #2e2e2e;transform:scaleX(0.8346);transform-origin:left center;">20</div>
<div class="t" style="left:9.30px;top:886.21px;font-size:14.68px;line-height:19px;color:#2e2e2e;-webkit-text-stroke:0.2px #2e2e2e;transform:scaleX(0.8346);transform-origin:left center;">21</div>
<div style="left:259px;top:527px;width:134px;height:63px;background:#fff;"></div>
<div style="left:394px;top:527px;width:143px;height:63px;background:#fff;"></div>
<div style="left:538px;top:527px;width:134px;height:63px;background:#fff;"></div>
<div style="left:259px;top:591px;width:134px;height:31px;background:#fff;"></div>
<div style="left:394px;top:591px;width:143px;height:31px;background:#fff;"></div>
<div style="left:538px;top:591px;width:134px;height:31px;background:#fff;"></div>
<div style="left:259px;top:623px;width:134px;height:31px;background:#fff;"></div>
<div style="left:394px;top:623px;width:143px;height:31px;background:#fff;"></div>
<div style="left:538px;top:623px;width:134px;height:31px;background:#fff;"></div>
<div style="left:259px;top:655px;width:134px;height:31px;background:#fff;"></div>
<div style="left:394px;top:655px;width:143px;height:31px;background:#fff;"></div>
<div style="left:538px;top:655px;width:134px;height:31px;background:#fff;"></div>
<div style="left:259px;top:687px;width:134px;height:32px;background:#fff;"></div>
<div style="left:394px;top:687px;width:143px;height:32px;background:#fff;"></div>
<div style="left:538px;top:687px;width:134px;height:32px;background:#fff;"></div>
<div style="left:259px;top:720px;width:134px;height:31px;background:#fff;"></div>
<div style="left:394px;top:720px;width:143px;height:31px;background:#fff;"></div>
<div style="left:538px;top:720px;width:134px;height:31px;background:#fff;"></div>
<div style="left:259px;top:752px;width:134px;height:31px;background:#fff;"></div>
<div style="left:394px;top:752px;width:143px;height:31px;background:#fff;"></div>
<div style="left:538px;top:752px;width:134px;height:31px;background:#fff;"></div>
<div style="left:806px;top:337px;width:1px;height:35px;background:#fff;"></div>
<div style="left:325px;top:336px;width:69px;height:37px;background:#00b050;"></div>
<div style="left:258px;top:372px;width:68px;height:33px;background:#00b050;"></div>
<div style="left:325px;top:469px;width:69px;height:33px;background:#00b050;"></div>
<div style="left:258px;top:622px;width:136px;height:65px;background:#00b050;"></div>
<div style="left:258px;top:751px;width:136px;height:33px;background:#00b050;"></div>
<div style="left:1210px;top:301px;width:1px;height:35px;background:#fff;"></div>
<div class="t" style="left:36.30px;top:306.19px;font-size:21.95px;line-height:29px;color:#000;-webkit-text-stroke:0.3px #000;transform:scaleX(1.0069);transform-origin:left center;">Wynik z polskiego</div>
<div class="t" style="left:36.30px;top:342.39px;font-size:21.95px;line-height:29px;color:#000;-webkit-text-stroke:0.3px #000;transform:scaleX(1.0389);transform-origin:left center;">Wynik z matematyki</div>
<div class="t" style="left:36.30px;top:376.09px;font-size:21.95px;line-height:29px;color:#000;-webkit-text-stroke:0.3px #000;">Wynik z angielskiego</div>
<div class="t" style="left:36.30px;top:407.59px;font-size:21.95px;line-height:29px;color:#000;-webkit-text-stroke:0.3px #000;transform:scaleX(1.0237);transform-origin:left center;">Wynik z biologii</div>
<div class="t" style="left:36.30px;top:439.89px;font-size:21.95px;line-height:29px;color:#000;-webkit-text-stroke:0.3px #000;transform:scaleX(1.0130);transform-origin:left center;">Wynik z geografii</div>
<div class="t" style="left:36.30px;top:471.89px;font-size:21.95px;line-height:29px;color:#000;-webkit-text-stroke:0.3px #000;transform:scaleX(1.0131);transform-origin:left center;">Wynik z chemii</div>
<div class="t" style="left:36.60px;top:592.79px;font-size:21.95px;line-height:29px;color:#000;-webkit-text-stroke:0.3px #000;transform:scaleX(0.9470);transform-origin:left center;">Polski</div>
<div class="t" style="left:36.60px;top:625.29px;font-size:21.95px;line-height:29px;color:#000;-webkit-text-stroke:0.3px #000;transform:scaleX(1.0474);transform-origin:left center;">Matematyka</div>
<div class="t" style="left:35.70px;top:657.29px;font-size:21.95px;line-height:29px;color:#000;-webkit-text-stroke:0.3px #000;">Angielski</div>
<div class="t" style="left:36.60px;top:689.49px;font-size:21.95px;line-height:29px;color:#000;-webkit-text-stroke:0.3px #000;transform:scaleX(0.9905);transform-origin:left center;">Biologia</div>
<div class="t" style="left:35.70px;top:721.79px;font-size:21.95px;line-height:29px;color:#000;-webkit-text-stroke:0.3px #000;transform:scaleX(0.9899);transform-origin:left center;">Geografia</div>
<div class="t" style="left:35.70px;top:753.89px;font-size:21.95px;line-height:29px;color:#000;-webkit-text-stroke:0.3px #000;transform:scaleX(0.9719);transform-origin:left center;">Chemia</div>
<div class="t" style="left:286.10px;top:261.57px;font-size:29.51px;line-height:38px;color:#000;-webkit-text-stroke:0.45px #000;transform:scaleX(0.7083);transform-origin:left center;">P</div>
<div class="t" style="left:352.50px;top:261.57px;font-size:29.51px;line-height:38px;color:#000;-webkit-text-stroke:0.45px #000;transform:scaleX(0.6966);transform-origin:left center;">R</div>
<div class="t" style="left:280.00px;top:307.05px;font-size:21.51px;line-height:28px;color:#000;-webkit-text-stroke:0.3px #000;transform:scaleX(1.0136);transform-origin:left center;">30</div>
<div class="t" style="left:280.00px;top:343.25px;font-size:21.51px;line-height:28px;color:#000;-webkit-text-stroke:0.3px #000;transform:scaleX(1.0136);transform-origin:left center;">50</div>
<div class="t" style="left:347.40px;top:343.25px;font-size:21.51px;line-height:28px;color:#000;-webkit-text-stroke:0.3px #000;">55</div>
<div class="t" style="left:280.00px;top:376.35px;font-size:21.51px;line-height:28px;color:#000;-webkit-text-stroke:0.3px #000;transform:scaleX(1.0136);transform-origin:left center;">80</div>
<div class="t" style="left:346.70px;top:408.45px;font-size:21.51px;line-height:28px;color:#000;-webkit-text-stroke:0.3px #000;transform:scaleX(1.0596);transform-origin:left center;">40</div>
<div class="t" style="left:346.70px;top:440.45px;font-size:21.51px;line-height:28px;color:#000;-webkit-text-stroke:0.3px #000;transform:scaleX(1.0178);transform-origin:left center;">45</div>
<div class="t" style="left:347.40px;top:473.05px;font-size:21.51px;line-height:28px;color:#000;-webkit-text-stroke:0.3px #000;transform:scaleX(1.0303);transform-origin:left center;">50</div>
<div class="t" style="left:279.90px;top:529.55px;font-size:21.22px;line-height:28px;color:#000;-webkit-text-stroke:0.3px #000;transform:scaleX(1.0257);transform-origin:left center;">Waga dla</div>
<div class="t" style="left:275.00px;top:561.35px;font-size:21.22px;line-height:28px;color:#000;-webkit-text-stroke:0.3px #000;transform:scaleX(1.0438);transform-origin:left center;">kierunku x</div>
<div class="t" style="left:419.90px;top:529.55px;font-size:21.22px;line-height:28px;color:#000;-webkit-text-stroke:0.3px #000;transform:scaleX(1.0257);transform-origin:left center;">Waga dla</div>
<div class="t" style="left:414.70px;top:561.35px;font-size:21.22px;line-height:28px;color:#000;-webkit-text-stroke:0.3px #000;transform:scaleX(1.0500);transform-origin:left center;">kierunku y</div>
<div class="t" style="left:559.40px;top:529.55px;font-size:21.22px;line-height:28px;color:#000;-webkit-text-stroke:0.3px #000;transform:scaleX(1.0257);transform-origin:left center;">Waga dla</div>
<div class="t" style="left:554.70px;top:561.35px;font-size:21.22px;line-height:28px;color:#000;-webkit-text-stroke:0.3px #000;transform:scaleX(1.0397);transform-origin:left center;">kierunku z</div>
<div class="t" style="left:322.93px;top:595.74px;font-size:22.67px;line-height:29px;color:#111;">/</div>
<div class="t" style="left:460.00px;top:599.16px;font-size:16.28px;line-height:21px;color:#000;-webkit-text-stroke:0.25px #000;transform:scaleX(1.1499);transform-origin:left center;">1</div>
<div class="t" style="left:588.80px;top:599.16px;font-size:16.28px;line-height:21px;color:#000;-webkit-text-stroke:0.25px #000;transform:scaleX(1.0359);transform-origin:left center;">0,25</div>
<div class="t" style="left:320.20px;top:631.66px;font-size:16.28px;line-height:21px;color:#000;-webkit-text-stroke:0.25px #000;transform:scaleX(1.1499);transform-origin:left center;">1</div>
<div class="t" style="left:460.00px;top:631.66px;font-size:16.28px;line-height:21px;color:#000;-webkit-text-stroke:0.25px #000;transform:scaleX(1.1499);transform-origin:left center;">1</div>
<div class="t" style="left:599.40px;top:631.66px;font-size:16.28px;line-height:21px;color:#000;-webkit-text-stroke:0.25px #000;transform:scaleX(1.1499);transform-origin:left center;">1</div>
<div class="t" style="left:313.90px;top:663.46px;font-size:16.28px;line-height:21px;color:#000;-webkit-text-stroke:0.25px #000;transform:scaleX(1.0694);transform-origin:left center;">0,4</div>
<div class="t" style="left:453.70px;top:663.46px;font-size:16.28px;line-height:21px;color:#000;-webkit-text-stroke:0.25px #000;transform:scaleX(1.0694);transform-origin:left center;">0,5</div>
<div class="t" style="left:593.40px;top:663.46px;font-size:16.28px;line-height:21px;color:#000;-webkit-text-stroke:0.25px #000;transform:scaleX(1.0429);transform-origin:left center;">0,2</div>
<div class="t" style="left:320.20px;top:695.96px;font-size:16.28px;line-height:21px;color:#000;-webkit-text-stroke:0.25px #000;transform:scaleX(1.1499);transform-origin:left center;">1</div>
<div class="t" style="left:460.00px;top:695.96px;font-size:16.28px;line-height:21px;color:#000;-webkit-text-stroke:0.25px #000;transform:scaleX(1.1499);transform-origin:left center;">1</div>
<div class="t" style="left:602.13px;top:692.54px;font-size:22.67px;line-height:29px;color:#111;">/</div>
<div class="t" style="left:322.93px;top:724.34px;font-size:22.67px;line-height:29px;color:#111;">/</div>
<div class="t" style="left:460.00px;top:727.76px;font-size:16.28px;line-height:21px;color:#000;-webkit-text-stroke:0.25px #000;transform:scaleX(1.1499);transform-origin:left center;">1</div>
<div class="t" style="left:593.10px;top:727.76px;font-size:16.28px;line-height:21px;color:#000;-webkit-text-stroke:0.25px #000;transform:scaleX(1.0694);transform-origin:left center;">0,5</div>
<div class="t" style="left:320.20px;top:760.26px;font-size:16.28px;line-height:21px;color:#000;-webkit-text-stroke:0.25px #000;transform:scaleX(1.1499);transform-origin:left center;">1</div>
<div class="t" style="left:460.00px;top:760.26px;font-size:16.28px;line-height:21px;color:#000;-webkit-text-stroke:0.25px #000;transform:scaleX(1.1499);transform-origin:left center;">1</div>
<div class="t" style="left:602.13px;top:756.84px;font-size:22.67px;line-height:29px;color:#111;">/</div>
<div class="t" style="left:747.80px;top:339.34px;font-size:25.58px;line-height:33px;color:#000;-webkit-text-stroke:0.3px #000;transform:scaleX(0.9545);transform-origin:left center;">Kierunek X</div>
<div class="t" style="left:743.80px;top:595.00px;font-size:19.62px;line-height:26px;color:#000;-webkit-text-stroke:0.3px #000;transform:scaleX(1.0344);transform-origin:left center;">Wynik</div>
<div class="t" style="left:833.10px;top:593.85px;font-size:21.22px;line-height:28px;color:#ff0000;font-weight:bold;transform:scaleX(1.0131);transform-origin:left center;">137</div>
<div style="left:805px;top:589px;width:70px;height:35px;background:transparent;border:2px solid #217346;"></div>
<div style="left:871px;top:619px;width:7px;height:7px;background:#217346;border:1px solid #fff;"></div>
<div style="left:741px;top:372px;width:373px;height:200px;background:#ecf5fd;"></div>
<svg style="left:0;top:0" width="1280" height="903" viewBox="0 0 1280 903"><rect x="741" y="438.8" width="374.4" height="2.3" fill="#232b2f"/><rect x="741" y="507.6" width="374" height="1.6" fill="#3a4246"/><rect x="923.1" y="440" width="1.7" height="132" fill="#3a4045"/><rect x="1112.9" y="372" width="1.5" height="200" fill="#2c3236"/></svg>
<div class="t" style="left:900.70px;top:387.47px;font-size:13.66px;line-height:18px;color:#505050;transform:scaleX(1.0233);transform-origin:left center;">Przedmiot</div>
<div class="t" style="left:776.10px;top:456.17px;font-size:13.66px;line-height:18px;color:#505050;transform:scaleX(1.0167);transform-origin:left center;">Przedmioty (dwa do</div>
<div class="t" style="left:812.07px;top:475.67px;font-size:13.66px;line-height:18px;color:#505050;transform:scaleX(1.0467);transform-origin:left center;">wyboru)</div>
<div class="t" style="left:967.60px;top:456.07px;font-size:13.66px;line-height:18px;color:#505050;">biologia, chemia,</div>
<div class="t" style="left:958.70px;top:475.77px;font-size:13.66px;line-height:18px;color:#505050;transform:scaleX(1.0280);transform-origin:left center;">matematyka, fizyka</div>
<div class="t" style="left:803.40px;top:523.57px;font-size:13.66px;line-height:18px;color:#505050;">Język obcy</div>
<div class="t" style="left:770.50px;top:543.67px;font-size:13.66px;line-height:18px;color:#505050;transform:scaleX(1.0346);transform-origin:left center;">nowożytny (pisemny)</div>
<div class="t" style="left:993.50px;top:524.07px;font-size:13.66px;line-height:18px;color:#505050;transform:scaleX(1.0073);transform-origin:left center;">dowolny</div>
<div style="left:0px;top:897px;width:1280px;height:6px;background:#e4e4e4;"></div>
<div style="left:0px;top:897px;width:258px;height:1px;background:#b4b4b4;"></div>
<div style="left:337px;top:897px;width:943px;height:1px;background:#b4b4b4;"></div>
<div style="left:258px;top:897px;width:80px;height:6px;background:#fff;"></div>
<div style="left:95px;top:899px;width:1px;height:4px;background:#bdbdbd;"></div>
<div style="left:176px;top:899px;width:1px;height:4px;background:#bdbdbd;"></div>
<div style="left:337px;top:897px;width:1px;height:6px;background:#b4b4b4;"></div>
<div style="left:1075px;top:898px;width:205px;height:2px;background:#f0f0f0;"></div>
<div style="left:1075px;top:900px;width:205px;height:1px;background:#b8b8b8;"></div>
<div style="left:1075px;top:901px;width:205px;height:2px;background:#dcdcdc;"></div>
<div class="t" style="left:110.00px;top:896.87px;font-size:13.66px;line-height:18px;color:#444;transform:scaleX(1.0545);transform-origin:left center;">Arkusz1</div>
<div class="t" style="left:191.00px;top:896.87px;font-size:13.66px;line-height:18px;color:#444;transform:scaleX(1.0342);transform-origin:left center;">Arkusz2</div>
<div class="t" style="left:271.00px;top:896.87px;font-size:13.66px;line-height:18px;color:#217346;font-weight:bold;transform:scaleX(1.1103);transform-origin:left center;">Arkusz3</div>
<div style="left:369px;top:900.5px;width:17px;height:17px;border:1px solid #8a8a8a;border-radius:50%;"></div>
</body></html>
